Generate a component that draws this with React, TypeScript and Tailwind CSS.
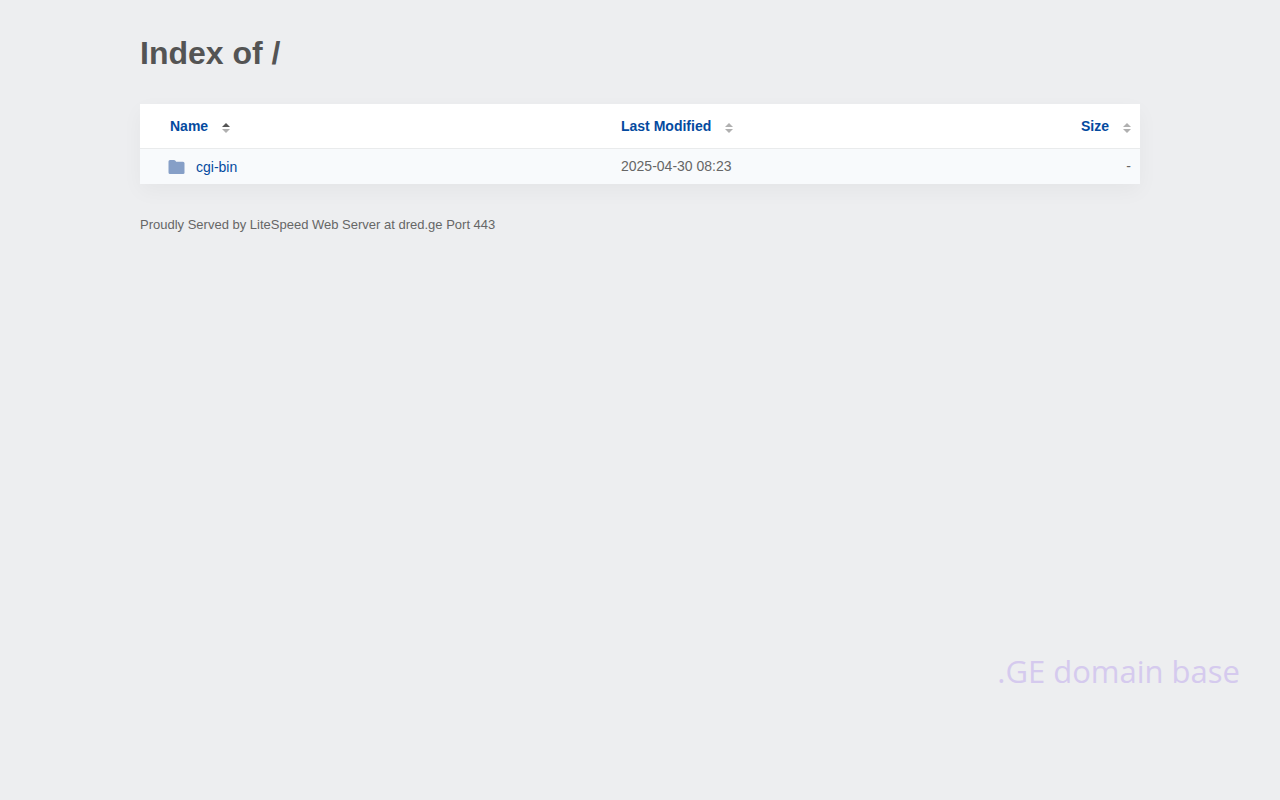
import React, { useState } from 'react';

type SortKey = 'name' | 'modified' | 'size';
type Direction = 'asc' | 'desc';

interface Entry {
  name: string;
  href: string;
  modified: string;
  size: string;
}

const entries: Entry[] = [
  { name: 'cgi-bin', href: '/cgi-bin/', modified: '2025-04-30 08:23', size: '-' },
];

function FolderIcon() {
  return (
    <svg width="17" height="14" viewBox="0 0 17 14" fill="#869fc7" aria-hidden="true">
      <path d="M2 0h4c.5 0 .9.2 1.200.600L8.200 1.800H15a1.500 1.500 0 0 1 1.500 1.500v9A1.500 1.500 0 0 1 15 14H2A1.500 1.500 0 0 1 .5 12.500v-11A1.500 1.500 0 0 1 2 0z" />
    </svg>
  );
}

interface SortButtonProps {
  label: string;
  direction?: Direction;
  onClick: () => void;
}

function SortButton({ label, direction, onClick }: SortButtonProps) {
  return (
    <button
      type="button"
      onClick={onClick}
      className="inline-flex items-center gap-[13px] font-bold text-[#044a9f] cursor-pointer"
    >
      {label}
      <svg width="10" height="10" viewBox="0 0 10 10" className="mt-1" aria-hidden="true">
        <path d="M1 4L5 0L9 4z" fill={direction === 'asc' ? '#555' : '#b0b0b0'} />
        <path d="M1 6L5 10L9 6z" fill={direction === 'desc' ? '#555' : '#b0b0b0'} />
      </svg>
    </button>
  );
}

export default function App() {
  const [sortKey, setSortKey] = useState<SortKey>('name');
  const [direction, setDirection] = useState<Direction>('asc');

  const sortBy = (key: SortKey) => {
    setDirection(key === sortKey && direction === 'asc' ? 'desc' : 'asc');
    setSortKey(key);
  };

  const directionOf = (key: SortKey) => (key === sortKey ? direction : undefined);

  const rows = [...entries].sort((a, b) => {
    const order = a[sortKey].localeCompare(b[sortKey]);
    return direction === 'asc' ? order : -order;
  });

  return (
    <div className="flex min-h-screen flex-col bg-[#edeef0] font-['Liberation_Sans',Arial,sans-serif] text-sm text-[#666]">
      <main className="mx-auto w-full max-w-[1040px] px-5 pt-8">
        <h1 className="text-[32px] leading-[42px] font-bold text-[#545454]">Index of /</h1>

        <table className="mt-[30px] w-full table-fixed bg-white shadow-[0_7px_20px_rgba(0,0,0,0.04)]">
          <colgroup>
            <col className="w-[47%]" />
            <col className="w-[43%]" />
            <col className="w-[10%]" />
          </colgroup>
          <thead>
            <tr className="h-11 border-b border-[#e9ebec] text-left">
              <th className="pl-[30px]">
                <SortButton label="Name" direction={directionOf('name')} onClick={() => sortBy('name')} />
              </th>
              <th className="pl-[11px]">
                <SortButton
                  label="Last Modified"
                  direction={directionOf('modified')}
                  onClick={() => sortBy('modified')}
                />
              </th>
              <th className="pr-2 text-right">
                <SortButton label="Size" direction={directionOf('size')} onClick={() => sortBy('size')} />
              </th>
            </tr>
          </thead>
          <tbody>
            {rows.map((entry) => (
              <tr key={entry.name} className="h-9 bg-[#f8fafc]">
                <td className="pl-7">
                  <a href={entry.href} className="flex items-center gap-[11px] pt-px text-[#044a9f]">
                    <FolderIcon />
                    {entry.name}
                  </a>
                </td>
                <td className="pl-[11px]">{entry.modified}</td>
                <td className="pr-[9px] text-right">{entry.size}</td>
              </tr>
            ))}
          </tbody>
        </table>

        <p className="mt-8 text-[13px] leading-[18px]">
          Proudly Served by LiteSpeed Web Server at dred.ge Port 443
        </p>
      </main>

      <p className="mt-auto pr-10 pb-[105px] text-right font-['Open_Sans','Noto_Sans',sans-serif] text-[31px] leading-12 text-[#d5caee]">
        .GE domain base
      </p>
    </div>
  );
}
